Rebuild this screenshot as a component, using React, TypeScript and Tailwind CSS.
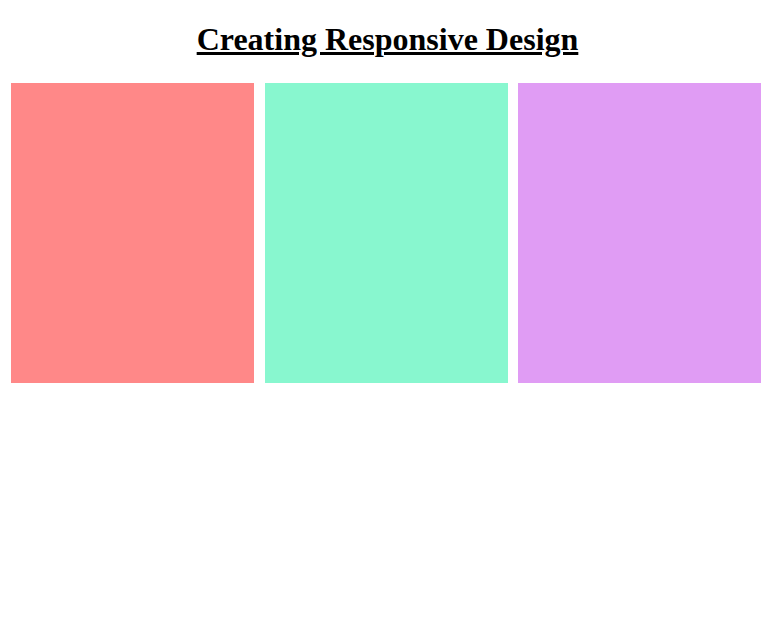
import React from 'react'

const boxes = ['bg-[#ff8888]', 'bg-[#88f7cf]', 'bg-[#e09cf4]']

const App: React.FC = () => {
  return (
    <div className="min-h-[640px] bg-white font-['Liberation_Serif',serif] text-black">
      <h1 className="pt-[21px] text-center text-[32px] font-bold leading-[37px] underline">
        Creating Responsive Design
      </h1>

      {/* colour boxes */}
      <div className="mt-[25px] flex pl-[11px]">
        <div className={`h-[300px] w-[243px] ${boxes[0]}`} />
        <div className={`ml-[11px] h-[300px] w-[243px] ${boxes[1]}`} />
        <div className={`ml-[10px] h-[300px] w-[243px] ${boxes[2]}`} />
      </div>
    </div>
  )
}

export default App
